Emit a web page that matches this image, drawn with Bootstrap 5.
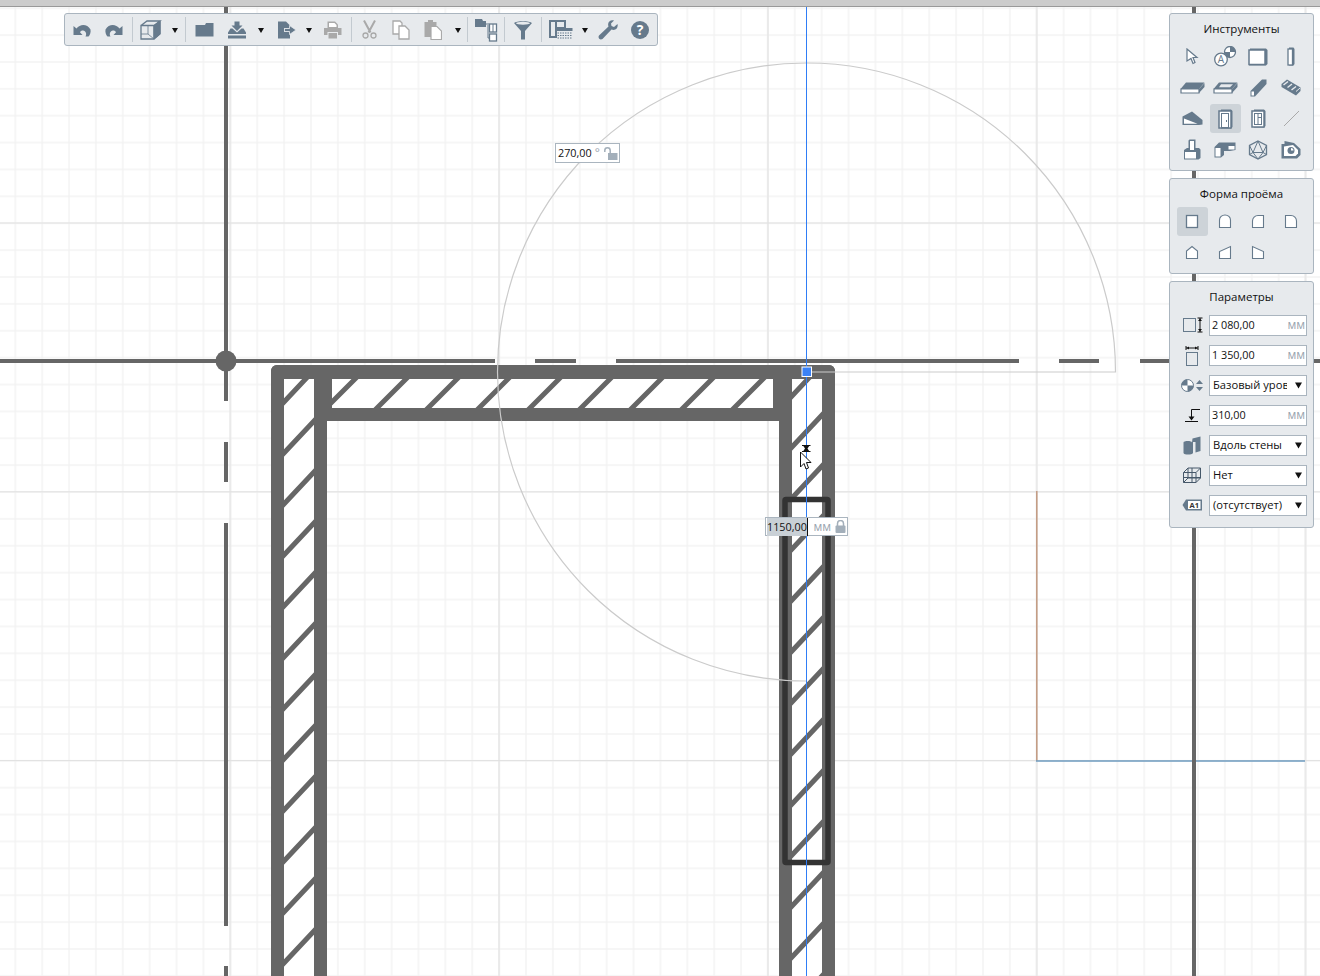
<!DOCTYPE html>
<html lang="ru">
<head>
    <meta charset="UTF-8">
    <meta name="viewport" content="width=device-width, initial-scale=1.0">
    <title>Проём</title>
    <link href="https://cdn.jsdelivr.net/npm/bootstrap@5.3.0/dist/css/bootstrap.min.css" rel="stylesheet">
    <style>
        body { background: #fff; font-family: "Open Sans", "Liberation Sans", sans-serif; font-size: 12px; color: #111; overflow: hidden; }
        .app-view { width: 1320px; height: 976px; overflow: hidden; }
        .title-strip { height: 7px; background: #ccc; border-bottom: 1px solid #999; }
        .drawing { left: 0; top: 0; }

        .tool-strip { left: 64px; top: 13px; width: 594px; height: 33px; background: #e7eaed; border: 1px solid #aab5bf; border-radius: 3px; padding-left: 1px; }
        .tb-btn { width: 32px; height: 31px; }
        .tb-caret { width: 16px; height: 31px; }
        .tb-caret.narrow { width: 12px; }
        .tb-caret.mid { width: 15px; }
        .tb-caret::after { content: ""; border-left: 3.5px solid transparent; border-right: 3.5px solid transparent; border-top: 5px solid #111; margin-top: 2px; }
        .tb-sep { width: 1px; height: 25px; background: #c3cad0; margin: 0 2px; }
        .tb-sep.sep-a { margin: 0 1px 0 3px; }
        .tb-sep.sep-b { margin: 0 0 0 1px; }
        .tb-sep.sep-c { margin: 0 0 0 2px; }
        .gap1 { margin-left: 1px; }
        .gap2 { margin-left: 2px; }
        .gap3 { margin-left: 3px; }

        .side-panels { left: 1169px; top: 13px; width: 145px; gap: 7px; }
        .side-box { background: #e7eaed; border: 1px solid #aab5bf; border-radius: 3px; }
        .side-title { text-align: center; font-size: 11.5px; line-height: 16px; padding-top: 7px; }
        .tool-grid { display: grid; grid-template-columns: repeat(4, 33px); justify-content: center; padding-bottom: 5px; }
        .tool-cell { height: 31px; }
        .tool-cell.active { background: #cdd3d8; border-radius: 3px; margin: 1px; height: 29px; }
        .params-title { margin-bottom: 5px; }
        .params-end { height: 7px; }
        .param-row { height: 30px; padding-left: 5px; }
        .param-icon { width: 34px; height: 26px; }
        .val-box { width: 98px; height: 21px; background: #fff; border: 1px solid #aab5bf; padding: 0 1px 0 2px; line-height: 18px; font-size: 10.8px; }
        .unit-text { color: #9aa5af; font-size: 12px; }
        .param-row .form-select { width: 98px; height: 21px; min-height: 0; padding: 0 19px 0 3px; font-size: 11.2px; line-height: 18px; border: 1px solid #aab5bf; border-radius: 0; color: #111; background-position: right 3px center; background-size: 9px 9px; background-image: url("data:image/svg+xml,%3csvg xmlns='http://www.w3.org/2000/svg' viewBox='0 0 9 9'%3e%3cpath d='M1 1.500h7l-3.500 6z' fill='%23111'/%3e%3c/svg%3e"); }

        .dim-box { height: 20px; background: #fff; border: 1px solid #aab5bf; font-size: 10.8px; line-height: 18px; padding: 0 1px 0 2px; }
        .dim-angle { left: 555px; top: 143px; width: 65px; }
        .dim-length { left: 765px; top: 517px; width: 83px; height: 19px; padding-left: 1px; }
        .dim-sel { background: #c9d0d6; border-right: 1px solid #111; }
        .dim-unit { color: #9aa5af; font-size: 12px; }
        .cursor-mark { left: 798px; top: 444px; }
    </style>
</head>
<body>
<div class="app-view position-relative">

    <!-- drawing canvas -->
    <svg class="drawing position-absolute" width="1320" height="976" viewBox="0 0 1320 976">
        <defs>
            <pattern id="gridMinor" patternUnits="userSpaceOnUse" x="14.3" y="7.2" width="26.88" height="26.88">
                <path d="M0 1H26.88M1 0V26.88" stroke="#f3f3f3" stroke-width="1.5" fill="none"/>
            </pattern>
            <pattern id="gridMajor" patternUnits="userSpaceOnUse" x="229.3" y="-46.3" width="268.8" height="268.8">
                <path d="M1 0V268.8" stroke="#e6e6e6" stroke-width="1.5" fill="none"/>
                <path d="M0 0.5H268.8" stroke="#e0e0e0" stroke-width="1" fill="none"/>
            </pattern>
            <clipPath id="wallClip"><rect x="271" y="365" width="564" height="620" rx="6"/></clipPath>
        </defs>
        <rect y="7" width="1320" height="969" fill="url(#gridMinor)"/>
        <rect y="7" width="1320" height="969" fill="url(#gridMajor)"/>

        <!-- other walls far away -->
        <path d="M1036.8 491V761" stroke="#c39a80" stroke-width="1.5" fill="none"/>
        <path d="M1036 761H1305" stroke="#6f9cc0" stroke-width="1.6" fill="none"/>

        <!-- axes -->
        <path d="M226 7V401M226 442V482M226 523V926M226 966V976" stroke="#666" stroke-width="4" fill="none"/>
        <path d="M0 361H495M535 361H576M616 361H1019M1059 361H1099M1140 361H1320" stroke="#666" stroke-width="4" fill="none"/>
        <path d="M1194 7V976" stroke="#666" stroke-width="4" fill="none"/>
        <circle cx="226" cy="361" r="10.5" fill="#666"/>

        <!-- walls -->
        <g clip-path="url(#wallClip)">
            <rect x="284" y="379" width="30" height="600" fill="#fff"/>
            <rect x="332" y="379" width="441" height="29" fill="#fff"/>
            <rect x="792" y="379" width="30" height="600" fill="#fff"/>
            <g stroke="#666" stroke-width="5" fill="none">
                <path d="M280 406.3L318 365.7M280 457.3L318 416.7M280 508.3L318 467.7M280 559.3L318 518.7M280 610.3L318 569.7M280 661.3L318 620.7M280 712.3L318 671.7M280 763.3L318 722.7M280 814.3L318 773.7M280 865.3L318 824.7M280 916.3L318 875.7M280 967.3L318 926.7"/>
                <path d="M788 400.3L826 359.7M788 451.3L826 410.7M788 502.3L826 461.7M788 553.3L826 512.7M788 604.3L826 563.7M788 655.3L826 614.7M788 706.3L826 665.7M788 757.3L826 716.7M788 808.3L826 767.7M788 859.3L826 818.7M788 910.3L826 869.7M788 961.3L826 920.7M788 1012.3L826 971.7"/>
                <path d="M322 412L364 370M373 412L415 370M424 412L466 370M475 412L517 370M526 412L568 370M577 412L619 370M628 412L670 370M679 412L721 370M730 412L772 370"/>
            </g>
            <g fill="#666">
                <rect x="271" y="365" width="564" height="14"/>
                <rect x="271" y="365" width="13" height="620"/>
                <rect x="314" y="379" width="13" height="606"/>
                <rect x="779" y="379" width="13" height="606"/>
                <rect x="822" y="365" width="13" height="620"/>
                <rect x="314" y="379" width="18" height="29"/>
                <rect x="773" y="379" width="19" height="29"/>
                <rect x="314" y="408" width="478" height="13"/>
            </g>
        </g>

        <!-- opening outline -->
        <rect x="785" y="499.5" width="43" height="363" rx="1" fill="none" stroke="#333" stroke-width="5.5"/>

        <!-- protractor -->
        <path d="M806 372H1115.5A309 309 0 1 0 806.5 681H790" fill="none" stroke="#cbcbcb" stroke-width="1.2"/>

        <!-- guide + handle -->
        <path d="M806.5 7V976" stroke="#2f7df6" stroke-width="1"/>
        <rect x="802" y="367" width="9.5" height="9.5" fill="#3b82f6" stroke="#fff"/>
    </svg>

    <div class="title-strip position-relative"></div>

    <!-- top toolbar -->
    <div class="tool-strip position-absolute d-flex align-items-center">
        <div class="tb-btn d-flex align-items-center justify-content-center"><svg width="18" height="14" viewBox="0 0 18 14"><path d="M0.500 3L3.500 5.500C7 1 14 0.500 17.500 6.500C18 9 17 12 15.500 13.500H12.500C14 11 13 8 10 7.500C8.500 7.500 7.500 8.200 7 9.200L9.500 12H0.500Z" fill="#667a8c"/></svg></div>
        <div class="tb-btn d-flex align-items-center justify-content-center"><svg width="18" height="14" viewBox="0 0 18 14"><path d="M17.500 3L14.500 5.500C11 1 4 0.500 0.500 6.500C0 9 1 12 2.500 13.500H5.500C4 11 5 8 8 7.500C9.500 7.500 10.500 8.200 11 9.200L8.500 12H17.500Z" fill="#667a8c"/></svg></div>
        <div class="tb-sep"></div>
        <div class="tb-btn d-flex align-items-center justify-content-center"><svg width="22" height="20" viewBox="0 0 22 20" fill="none" stroke="#667a8c"><path d="M1 5.500H14V19H1ZM1 5.500L7 1H20L14 5.500M20 1V14L14 19" stroke-width="1.300"/><path d="M8 6V14H1M8 14L14 19" stroke-width="0.800"/><path d="M14 5.500L20 1V14L14 19Z" fill="#667a8c"/></svg></div>
        <div class="tb-caret d-flex align-items-center justify-content-center"></div>
        <div class="tb-sep"></div>
        <div class="tb-btn d-flex align-items-center justify-content-center"><svg width="19" height="15" viewBox="0 0 19 15"><path d="M0.500 3H10L11 1H18.500V14.500H0.500Z" fill="#667a8c"/></svg></div>
        <div class="tb-btn gap1 d-flex align-items-center justify-content-center"><svg width="20" height="18" viewBox="0 0 20 18"><path d="M7.500 0.500H12.500V4.500H15.500L10 10L4.500 4.500H7.500Z M3.500 7.500H5.500L10 11.500L14.500 7.500H16.500L19 11.500V13H1V11.500Z" fill="#667a8c"/><rect x="1" y="14.500" width="18" height="3" fill="#667a8c"/></svg></div>
        <div class="tb-caret d-flex align-items-center justify-content-center"></div>
        <div class="tb-btn gap2 d-flex align-items-center justify-content-center"><svg width="20" height="18" viewBox="0 0 20 18"><path d="M1 0.500H9L13 4.500V7H7V11H13V17.500H1Z" fill="#667a8c"/><path d="M7.500 7.500H12.500V4.500L19 9L12.500 13.500V10.500H7.500Z" fill="#667a8c" stroke="#e7eaed" stroke-width="0.800"/></svg></div>
        <div class="tb-caret narrow d-flex align-items-center justify-content-center"></div>
        <div class="tb-btn gap1 d-flex align-items-center justify-content-center"><svg width="19" height="18" viewBox="0 0 19 18"><path d="M4.500 0.500H12L15 3.500V7H4.500Z" fill="#a9a9a9"/><path d="M6 2H11.500L13.500 4V6H6Z" fill="#fff"/><path d="M1 7H18.500V14H15V11H4.500V14H1Z" fill="#a9a9a9"/><rect x="5.500" y="12" width="8.500" height="5.500" fill="#a9a9a9"/></svg></div>
        <div class="tb-sep sep-a"></div>
        <div class="tb-btn d-flex align-items-center justify-content-center"><svg width="15" height="19" viewBox="0 0 15 19" fill="none" stroke="#a9a9a9"><path d="M2 0.500L8.500 12.500M13 0.500L6.500 12.500" stroke-width="2"/><circle cx="3.500" cy="15.500" r="2.500" stroke-width="1.300"/><circle cx="11.500" cy="15.500" r="2.500" stroke-width="1.300"/></svg></div>
        <div class="tb-btn d-flex align-items-center justify-content-center"><svg width="18" height="20" viewBox="0 0 18 20" fill="#fff" stroke="#a9a9a9" stroke-width="1.300"><path d="M1 1H8L10 3V14H1Z"/><path d="M7 6H13L17 10V19H7Z"/></svg></div>
        <div class="tb-btn d-flex align-items-center justify-content-center"><svg width="18" height="21" viewBox="0 0 18 21"><path d="M0.500 3H4V1H9V3H12.500V18H0.500Z" fill="#a9a9a9"/><path d="M7 7.500H13L17.500 12V20.500H7Z" fill="#fff" stroke="#a9a9a9" stroke-width="1.200"/></svg></div>
        <div class="tb-caret gap1 d-flex align-items-center justify-content-center"></div>
        <div class="tb-sep sep-b"></div>
        <div class="tb-btn gap2 d-flex align-items-center justify-content-center"><svg width="24" height="24" viewBox="0 0 24 24"><path d="M1 1H8L9 3H12V9H1Z" fill="#667a8c"/><path d="M12 6H15M14 7V20H16" stroke="#667a8c" fill="none"/><rect x="15.500" y="6" width="7" height="8" fill="#fff" stroke="#667a8c" stroke-width="1.300"/><path d="M19 6V14" stroke="#667a8c"/><rect x="15.500" y="16" width="7" height="7" fill="#fff" stroke="#667a8c" stroke-width="1.300"/></svg></div>
        <div class="tb-sep sep-c"></div>
        <div class="tb-btn gap2 d-flex align-items-center justify-content-center"><svg width="20" height="20" viewBox="0 0 20 20"><path d="M1 3C3 0.500 17 0.500 19 3L12 11V19.500H8V11Z" fill="#667a8c"/><ellipse cx="10" cy="3.200" rx="7" ry="1.500" fill="#e7eaed"/></svg></div>
        <div class="tb-sep sep-c"></div>
        <div class="tb-btn gap3 d-flex align-items-center justify-content-center"><svg width="24" height="20" viewBox="0 0 24 20"><rect x="1" y="1" width="15" height="16" fill="#e7eaed" stroke="#667a8c" stroke-width="2"/><path d="M7 1V17M7 8H16" stroke="#667a8c" stroke-width="2"/><rect x="8" y="8" width="15.500" height="11" fill="#e7eaed"/><rect x="8" y="8" width="15.500" height="3" fill="#667a8c"/><path d="M8.500 13H23.500M8.500 15.500H23.500M8.500 18H23.500" stroke="#667a8c" stroke-dasharray="1.500 1"/></svg></div>
        <div class="tb-caret mid d-flex align-items-center justify-content-center"></div>
        <div class="tb-btn d-flex align-items-center justify-content-center"><svg width="20" height="20" viewBox="0 0 20 20"><path d="M19.500 4L16 7L13.500 6L13 3.500L16 0.500C12 -0.500 9 2.500 10.500 6.500L1 15.500C-0.500 18 2 20.500 4.500 19L13.500 9.500C17.500 11 20.500 8 19.500 4Z" fill="#667a8c"/></svg></div>
        <div class="tb-btn d-flex align-items-center justify-content-center"><svg width="18" height="18" viewBox="0 0 18 18"><circle cx="9" cy="9" r="9" fill="#667a8c"/><text x="9" y="14" text-anchor="middle" font-size="14" font-weight="700" fill="#fff" font-family="Open Sans, sans-serif">?</text></svg></div>
    </div>

    <!-- right panels -->
    <div class="side-panels position-absolute d-flex flex-column">
        <div class="side-box">
            <div class="side-title">Инструменты</div>
            <div class="tool-grid mt-1">
                <div class="tool-cell d-flex align-items-center justify-content-center"><svg width="13" height="17" viewBox="0 0 13 17"><path d="M1 1L11 9.500H7L9 14.500L7 15.500L5 10.500L1 13Z" fill="#fff" stroke="#667a8c" stroke-width="1.200"/></svg></div>
                <div class="tool-cell d-flex align-items-center justify-content-center"><svg width="23" height="21" viewBox="0 0 23 21"><circle cx="16" cy="6" r="5.500" fill="#fff" stroke="#667a8c" stroke-width="1.300"/><path d="M16 6V0.500A5.500 5.500 0 0 1 21.500 6ZM16 6H10.500A5.500 5.500 0 0 0 16 11.500Z" fill="#667a8c"/><circle cx="7" cy="13.500" r="6.300" fill="#fff" stroke="#667a8c" stroke-width="1.300"/><text x="7" y="17" text-anchor="middle" font-size="10" fill="#667a8c" font-family="Open Sans, sans-serif">A</text></svg></div>
                <div class="tool-cell d-flex align-items-center justify-content-center"><svg width="20" height="18" viewBox="0 0 20 18"><path d="M2 0.500H18L19.500 2V16L18 17.500H1Z" fill="#667a8c"/><rect x="1" y="2" width="16" height="14.500" fill="#fff" stroke="#667a8c" stroke-width="1.500"/></svg></div>
                <div class="tool-cell d-flex align-items-center justify-content-center"><svg width="8" height="19" viewBox="0 0 8 19"><path d="M2 0.500H6.500L7.500 2V17L6.500 18.500H2Z" fill="#667a8c"/><rect x="1" y="2" width="4.500" height="16" fill="#fff" stroke="#667a8c" stroke-width="1.300"/></svg></div>

                <div class="tool-cell d-flex align-items-center justify-content-center"><svg width="25" height="12" viewBox="0 0 25 12"><path d="M6 0.500H24.500L19 7H0.500Z" fill="#667a8c"/><path d="M1 7H19V11H1Z" fill="#fff" stroke="#667a8c" stroke-width="1.200"/><path d="M19 7L24.500 1V5L19 11Z" fill="#667a8c"/></svg></div>
                <div class="tool-cell d-flex align-items-center justify-content-center"><svg width="25" height="12" viewBox="0 0 25 12"><path d="M6 0.500H24.500L19 7H0.500Z" fill="#667a8c"/><path d="M8 2.300H20L17 5.300H6Z" fill="#e7eaed"/><path d="M1 7H19V11H1Z" fill="#fff" stroke="#667a8c" stroke-width="1.200"/><path d="M19 7L24.500 1V5L19 11Z" fill="#667a8c"/></svg></div>
                <div class="tool-cell d-flex align-items-center justify-content-center"><svg width="17" height="18" viewBox="0 0 17 18"><path d="M0.500 12L12 0.500H16.500V5L5 17.500H0.500Z" fill="#667a8c"/><path d="M1.500 12.500H4V16.500H1.500Z" fill="#fff"/></svg></div>
                <div class="tool-cell d-flex align-items-center justify-content-center"><svg width="20" height="17" viewBox="0 0 20 17"><path d="M0.500 5L6 0.500L19.500 8.500V12L15 16.500L0.500 8Z" fill="#667a8c"/><path d="M2.500 6L7 2.500M6.500 8.500L11 5M10.500 11L15 7.500" stroke="#e7eaed" stroke-width="1.500"/><path d="M15 12.500L19 9" stroke="#e7eaed"/></svg></div>

                <div class="tool-cell d-flex align-items-center justify-content-center"><svg width="21" height="15" viewBox="0 0 21 15"><path d="M0.500 5.500L10 0.500L20.500 9V13.500L17 14H0.500Z" fill="#667a8c"/><path d="M2 7.500V12.700H15.500Z" fill="#fff"/></svg></div>
                <div class="tool-cell active d-flex align-items-center justify-content-center"><svg width="15" height="20" viewBox="0 0 15 20"><path d="M3 0.500H13L14.500 2V18L13 19.500H3Z" fill="#667a8c"/><rect x="1" y="2" width="12" height="17" fill="#fff" stroke="#667a8c" stroke-width="1.500"/><rect x="3.500" y="4.500" width="7" height="14" fill="#fff" stroke="#667a8c"/><rect x="8" y="11" width="1" height="2" fill="#667a8c"/></svg></div>
                <div class="tool-cell d-flex align-items-center justify-content-center"><svg width="15" height="19" viewBox="0 0 15 19"><path d="M3 0.500H13L14.500 2V17L13 18.500H3Z" fill="#667a8c"/><rect x="1" y="2" width="12" height="16" fill="#fff" stroke="#667a8c" stroke-width="1.500"/><rect x="3.500" y="4.500" width="7" height="11" fill="#fff" stroke="#667a8c"/><path d="M7 4.500V15.500M7 8.500H10.500" stroke="#667a8c"/></svg></div>
                <div class="tool-cell d-flex align-items-center justify-content-center"><svg width="17" height="17" viewBox="0 0 17 17"><path d="M1 16L16 1" stroke="#a9a9a9"/></svg></div>

                <div class="tool-cell d-flex align-items-center justify-content-center"><svg width="18" height="21" viewBox="0 0 18 21"><path d="M5.500 1.500L6.500 0.500H12.500V9H16L17.500 10.500V19L15.500 20.500H1V11L4 9H5.500Z" fill="#667a8c"/><rect x="2" y="13" width="11" height="6.500" fill="#fff"/><rect x="7" y="2" width="4" height="9" fill="#fff"/></svg></div>
                <div class="tool-cell d-flex align-items-center justify-content-center"><svg width="22" height="16" viewBox="0 0 22 16"><path d="M5 0.500H21.500V8L16 9H10V13L7 15.500H0.500V5Z" fill="#667a8c"/><rect x="1.500" y="6" width="5" height="8.500" fill="#fff"/><rect x="14.500" y="4" width="6" height="3.500" fill="#fff"/></svg></div>
                <div class="tool-cell d-flex align-items-center justify-content-center"><svg width="20" height="20" viewBox="0 0 20 20" fill="none" stroke="#667a8c"><path d="M10 1L18.500 5.500V14.500L10 19L1.500 14.500V5.500Z" stroke-width="1.300"/><path d="M10 1L5 12.500H15ZM1.500 5.500L5 12.500M18.500 5.500L15 12.500M5 12.500L10 19L15 12.500M1.500 14.500L5 12.500M18.500 14.500L15 12.500"/></svg></div>
                <div class="tool-cell d-flex align-items-center justify-content-center"><svg width="20" height="19" viewBox="0 0 20 19"><path d="M0.500 4H3.500V1L13 3L19.500 9V15L16 18.500H0.500Z" fill="#667a8c"/><path d="M3 6.500V16H14.500L17 13.500V10L12 5Z" fill="#fff"/><circle cx="10" cy="10.500" r="3.500" fill="#667a8c"/><path d="M10 10.500V8A2.500 2.500 0 0 1 12.500 10.500Z" fill="#fff"/></svg></div>
            </div>
        </div>

        <div class="side-box">
            <div class="side-title">Форма проёма</div>
            <div class="tool-grid mt-1">
                <div class="tool-cell active d-flex align-items-center justify-content-center"><svg width="14" height="15" viewBox="0 0 14 15"><rect x="1.500" y="1.500" width="11" height="12" fill="#fff" stroke="#667a8c" stroke-width="1.300"/></svg></div>
                <div class="tool-cell d-flex align-items-center justify-content-center"><svg width="14" height="15" viewBox="0 0 14 15"><path d="M1.500 13.500V6A5.500 5 0 0 1 12.500 6V13.500Z" fill="#fff" stroke="#667a8c" stroke-width="1.100"/></svg></div>
                <div class="tool-cell d-flex align-items-center justify-content-center"><svg width="14" height="15" viewBox="0 0 14 15"><path d="M1.500 13.500V7A5.500 5.500 0 0 1 7 1.500H12.500V13.500Z" fill="#fff" stroke="#667a8c" stroke-width="1.100"/></svg></div>
                <div class="tool-cell d-flex align-items-center justify-content-center"><svg width="14" height="15" viewBox="0 0 14 15"><path d="M1.500 13.500V1.500H7A5.500 5.500 0 0 1 12.500 7V13.500Z" fill="#fff" stroke="#667a8c" stroke-width="1.100"/></svg></div>

                <div class="tool-cell d-flex align-items-center justify-content-center"><svg width="14" height="15" viewBox="0 0 14 15"><path d="M1.500 13.500V6L7 1.500L12.500 6V13.500Z" fill="#fff" stroke="#667a8c" stroke-width="1.100"/></svg></div>
                <div class="tool-cell d-flex align-items-center justify-content-center"><svg width="14" height="15" viewBox="0 0 14 15"><path d="M1.500 13.500V6.500L12.500 1.500V13.500Z" fill="#fff" stroke="#667a8c" stroke-width="1.100"/></svg></div>
                <div class="tool-cell d-flex align-items-center justify-content-center"><svg width="14" height="15" viewBox="0 0 14 15"><path d="M1.500 13.500V1.500L12.500 6.500V13.500Z" fill="#fff" stroke="#667a8c" stroke-width="1.100"/></svg></div>
            </div>
        </div>

        <div class="side-box">
            <div class="side-title params-title">Параметры</div>
            <div class="param-row d-flex align-items-center">
                <div class="param-icon d-flex align-items-center justify-content-center"><svg width="21" height="16" viewBox="0 0 21 16"><rect x="1.500" y="1.500" width="12" height="13" fill="#e7eaed" stroke="#667a8c"/><path d="M15.500 1H20.500M15.500 15H20.500M18 1V15" stroke="#111"/><path d="M16 4H20L18 1.500ZM16 12H20L18 14.500Z" fill="#111"/></svg></div>
                <div class="val-box d-flex justify-content-between"><span>2 080,00</span><span class="unit-text">мм</span></div>
            </div>
            <div class="param-row d-flex align-items-center">
                <div class="param-icon d-flex align-items-center justify-content-center"><svg width="14" height="21" viewBox="0 0 14 21"><path d="M1 1V5M13 1V5M1 3H13" stroke="#111"/><path d="M4 1.500V4.500L1.500 3ZM10 1.500V4.500L12.500 3Z" fill="#111"/><rect x="1.500" y="7.500" width="11" height="13" fill="#e7eaed" stroke="#667a8c"/></svg></div>
                <div class="val-box d-flex justify-content-between"><span>1 350,00</span><span class="unit-text">мм</span></div>
            </div>
            <div class="param-row d-flex align-items-center">
                <div class="param-icon d-flex align-items-center justify-content-center"><svg width="23" height="13" viewBox="0 0 23 13"><circle cx="6.500" cy="6.500" r="6" fill="#fff" stroke="#667a8c"/><path d="M6.500 6.500V0.500A6 6 0 0 0 0.500 6.500ZM6.500 6.500H12.500A6 6 0 0 1 6.500 12.500Z" fill="#667a8c"/><path d="M15 5L18.500 1L22 5ZM15 8L18.500 12L22 8Z" fill="#667a8c"/></svg></div>
                <select class="form-select"><option>Базовый уровень</option></select>
            </div>
            <div class="param-row d-flex align-items-center">
                <div class="param-icon d-flex align-items-center justify-content-center"><svg width="17" height="15" viewBox="0 0 17 15"><path d="M16 1.500H7.500V11M1 13.500H14" stroke="#111" fill="none"/><path d="M4.500 8.500H10.500L7.500 12.500Z" fill="#111"/></svg></div>
                <div class="val-box d-flex justify-content-between"><span>310,00</span><span class="unit-text">мм</span></div>
            </div>
            <div class="param-row d-flex align-items-center">
                <div class="param-icon d-flex align-items-center justify-content-center"><svg width="18" height="19" viewBox="0 0 18 19"><path d="M0.500 6.500C0.500 4.500 9 4.500 9 6.500L9.500 2.500L17.500 0.500V15L12.500 16.500V6H10V17C9 19 1 19 0.500 17Z" fill="#667a8c"/></svg></div>
                <select class="form-select"><option>Вдоль стены</option></select>
            </div>
            <div class="param-row d-flex align-items-center">
                <div class="param-icon d-flex align-items-center justify-content-center"><svg width="20" height="20" viewBox="0 0 20 20" fill="none" stroke="#46586a" stroke-width="1"><path d="M1.500 7.500H14V17.500H1.500ZM6 3H18.500V13H6ZM1.500 7.500L6 3M14 7.500L18.500 3M14 17.500L18.500 13M1.500 17.500L6 13"/><path d="M10 3V17.500M1.500 12.500H18.500"/></svg></div>
                <select class="form-select"><option>Нет</option></select>
            </div>
            <div class="param-row d-flex align-items-center">
                <div class="param-icon d-flex align-items-center justify-content-center"><svg width="20" height="12" viewBox="0 0 20 12"><path d="M4 0.500H20V11.500H4L0.500 6Z" fill="#667a8c"/><rect x="6" y="2" width="12.500" height="8" fill="#fff"/><text x="12.200" y="9" text-anchor="middle" font-size="7.500" font-weight="700" fill="#333" font-family="Open Sans, sans-serif">A1</text></svg></div>
                <select class="form-select"><option>(отсутствует)</option></select>
            </div>
            <div class="params-end"></div>
        </div>
    </div>

    <!-- dimension inputs on the canvas -->
    <div class="dim-box dim-angle position-absolute d-flex align-items-center">
        <span>270,00</span><span class="dim-unit ms-auto">°</span>
        <svg class="ms-1" width="14" height="13" viewBox="0 0 14 13"><path d="M0.800 5V3.500A2.700 2.700 0 0 1 6.200 3.500V6.500" fill="none" stroke="#a3afba" stroke-width="1.500"/><rect x="4" y="6" width="9.500" height="7" fill="#a3afba"/></svg>
    </div>
    <div class="dim-box dim-length position-absolute d-flex align-items-center">
        <span class="dim-sel">1150,00</span><span class="dim-unit ms-auto">мм</span>
        <svg class="ms-1" width="11" height="13" viewBox="0 0 11 13"><path d="M2.500 6V3.500A3 3 0 0 1 8.500 3.500V6" fill="none" stroke="#a3afba" stroke-width="1.500"/><rect x="0.500" y="5.500" width="10" height="7.500" rx="1" fill="#a3afba"/></svg>
    </div>

    <!-- mouse cursor -->
    <svg class="cursor-mark position-absolute" width="18" height="28" viewBox="0 0 18 28">
        <path d="M5 1.500H11.500L9.500 4.500L11.500 7.500H5L7 4.500Z" fill="#111"/>
        <path d="M4 1.500H12.500M4 7.500H12.500" stroke="#111"/>
        <path d="M2.500 8V23L6 19.500L8 25L10.500 24L8.500 18.500H13Z" fill="#fff" stroke="#111"/>
    </svg>
</div>
<script src="https://cdn.jsdelivr.net/npm/bootstrap@5.3.0/dist/js/bootstrap.bundle.min.js"></script>
</body>
</html>
